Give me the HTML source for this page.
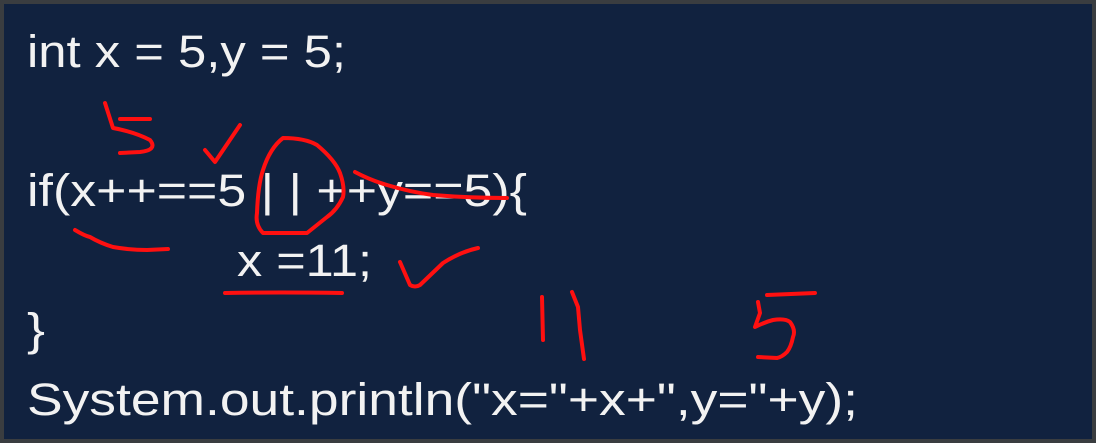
<!DOCTYPE html>
<html><head><style>
html,body{margin:0;padding:0;background:#2a2a2a;}
svg{display:block}
</style></head><body>
<svg width="1096" height="443" viewBox="0 0 1096 443" xmlns="http://www.w3.org/2000/svg">
<rect x="0" y="0" width="1096" height="443" fill="#3a3d40"/>
<rect x="4" y="4" width="1088" height="435" fill="#11223f"/>
<g fill="#f2f2f2" font-family="'Liberation Sans', sans-serif" font-size="45">
<text x="27" y="67" textLength="319" lengthAdjust="spacingAndGlyphs">int x = 5,y = 5;</text>
<text x="27" y="206" textLength="500" lengthAdjust="spacingAndGlyphs">if(x++==5 | | ++y==5){</text>
<text x="237" y="276" textLength="135" lengthAdjust="spacingAndGlyphs">x =11;</text>
<text x="27" y="345" textLength="18" lengthAdjust="spacingAndGlyphs">}</text>
<text x="27" y="415" textLength="831" lengthAdjust="spacingAndGlyphs">System.out.println("x="+x+",y="+y);</text>
</g>
<g fill="none" stroke="#ff1010" stroke-width="4" stroke-linecap="round" stroke-linejoin="round">
<path d="M105,103 L113,128 Q135,132 150,140 Q158,150 140,152 L120,153"/>
<path d="M120,119 L150,119"/>
<path d="M205,150 L215,162 L240,125"/>
<path d="M283,138 Q305,138 317,145 Q335,160 340,173 Q345,187 343,197 Q337,210 327,217 L307,233 L263,233 Q255,225 257,213 Q258,185 263,170 Q270,148 283,138 Z"/>
<path d="M355,172 Q370,180 387,185 Q410,192 433,195 Q470,198 507,198"/>
<path d="M75,230 Q85,236 90,237 Q100,243 113,247 Q130,250 147,250 L168,249"/>
<path d="M225,293 Q280,292 342,293"/>
<path d="M400,262 L410,285 Q415,288 420,285 L443,263 Q460,252 478,248"/>
<path d="M542,297 L543,340"/>
<path d="M572,292 L578,307 L580,330 L584,359"/>
<path d="M767,295 L815,293"/>
<path d="M758,302 L760,313 L755,327 Q765,322 773,320 Q785,318 790,322 Q796,330 793,337 Q791,347 787,352 Q782,357 777,358 L758,357"/>
</g>
</svg>
</body></html>
